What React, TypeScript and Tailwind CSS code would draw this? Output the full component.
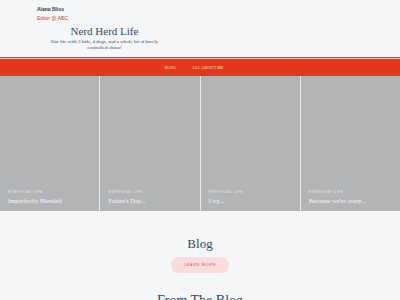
import React from "react";

const serif = { fontFamily: '"Liberation Serif", "DejaVu Serif", serif' };
const sans = { fontFamily: '"Liberation Sans", Arial, sans-serif' };

const cards = [
  { cat: "EVERYDAY LIFE", title: "Imperfectly Blended" },
  { cat: "EVERYDAY LIFE", title: "Father's Day..." },
  { cat: "EVERYDAY LIFE", title: "I try..." },
  { cat: "EVERYDAY LIFE", title: "Because we're crazy..." },
];

export default function App() {
  return (
    <div className="w-[400px] h-[300px] overflow-hidden bg-[#f5f6f8]">
      <header className="h-[57px] pl-[37px] pt-[6px]">
        <div className="text-[5px] font-bold text-[#2c3e50] leading-[6px]" style={sans}>
          Alana Bliss
        </div>
        <div className="text-[5px] text-[#e4371a] leading-[6px] mt-[3px]" style={sans}>
          Editor @ ABC
        </div>
        <div className="w-[135px] text-center mt-[4px]" style={serif}>
          <div className="text-[11px] leading-[12px] text-[#2f4b6e]">Nerd Herd Life</div>
          <div className="text-[5px] leading-[6px] text-[#2f4b6e] mt-[2px] px-[10px]">
            Our life with 3 kids, 4 dogs, and a whole lot of barely controlled chaos!
          </div>
        </div>
      </header>
      <div className="h-px bg-[#e4371a]" />
      <div className="h-px bg-[#f3c4bb]" />
      <nav className="h-[17px] bg-[#e4371a] flex items-center justify-center gap-[16px] pr-[12px]" style={serif}>
        <span className="text-[4px] text-[#fbe3dc] tracking-[0.2px]">BLOG</span>
        <span className="text-[4px] text-[#fbe3dc] tracking-[0.2px]">ALL ABOUT ME</span>
      </nav>
      <div className="grid grid-cols-4 h-[135px] gap-px bg-[#e9eaec]">
        {cards.map((c) => (
          <div key={c.title} className="bg-[#b3b4b6] flex flex-col justify-end pl-[8px] pb-[6px]">
            <div className="text-[4px] tracking-[0.3px] text-[#e2e2e4] leading-[5px]" style={sans}>
              {c.cat}
            </div>
            <div className="text-[6.5px] text-[#f7f7f8] leading-[8px] mt-[3px]" style={serif}>
              {c.title}
            </div>
          </div>
        ))}
      </div>
      <div className="flex flex-col items-center pt-[26px]">
        <h2 className="text-[13px] leading-[14px] text-[#2f4b6e]" style={serif}>Blog</h2>
        <div className="mt-[6px] w-[58px] h-[16px] rounded-full bg-[#f9dcdb] flex items-center justify-center">
          <span className="text-[4px] tracking-[0.6px] text-[#e4574a]" style={sans}>LEARN MORE</span>
        </div>
        <h2 className="mt-[20px] text-[14px] leading-[16px] text-[#2f4b6e]" style={serif}>From The Blog</h2>
      </div>
    </div>
  );
}
